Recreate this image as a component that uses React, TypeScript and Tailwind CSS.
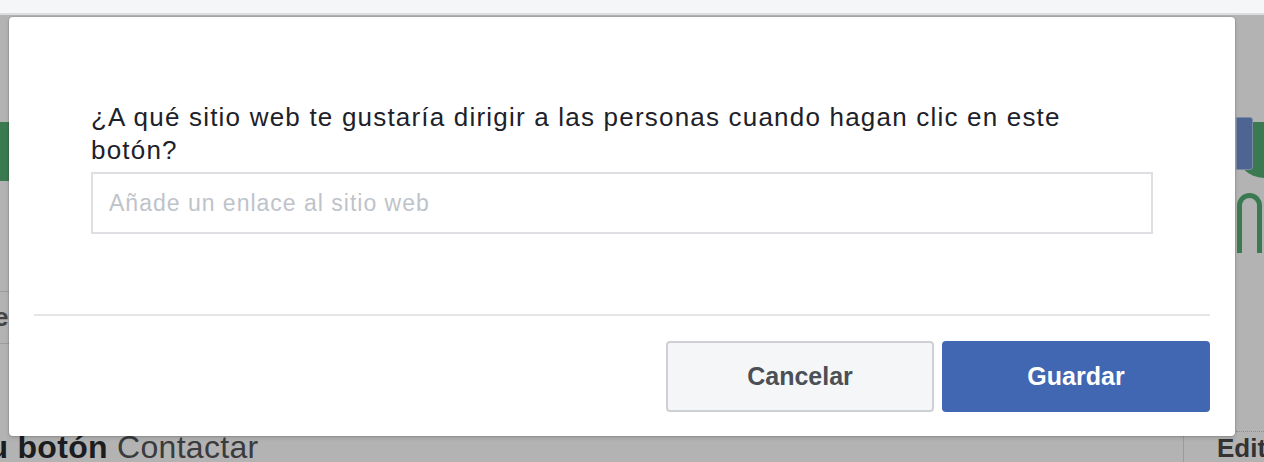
export default function App() {
  return (
    <div className="relative h-[462px] w-full overflow-hidden bg-[#b3b3b3] font-['Liberation_Sans',Helvetica,Arial,sans-serif]">
      {/* Página de fondo (cubierta por el overlay) */}
      <div className="h-[15px] border-b-2 border-[#dcdde0] bg-[#f5f6f7]" />
      <div className="flex h-[420px] justify-between">
        <div className="flex w-[9px] flex-col">
          <div className="h-[107px]" />
          <div className="h-[59px] bg-[#3b7a50]" />
          <div className="h-[110px]" />
          <div className="h-[53px] overflow-hidden border-y border-[#9c9c9c]">
            <span className="-ml-[6px] block text-[26px] font-bold leading-[50px] text-[#444]">e</span>
          </div>
        </div>
        <div className="flex w-[28px] flex-col">
          <div className="h-[107px]" />
          <div className="h-[56px] rounded-bl-[34px] bg-[#3b7a50]">
            <div className="-mt-[5px] h-[53px] w-[17px] rounded-r-[3px] border border-[#7a8aa6] bg-[#4f6591]" />
          </div>
          <div className="h-[15px]" />
          <div className="ml-[1px] h-[60px] w-[25px] rounded-t-[14px] border-x-[5px] border-t-[5px] border-[#3b7a50]" />
          <div className="h-[178px]" />
          <div className="border-t border-dotted border-[#8f8f8f]" />
        </div>
      </div>
      <div className="flex h-[27px] items-start justify-between">
        <div className="-ml-[29px] -mt-[1px] whitespace-nowrap text-[32px] leading-[27px] tracking-[0.3px] text-[#3a3b3d]">
          <span className="font-bold text-[#1c1d20]">Tu botón</span> Contactar
        </div>
        <div className="flex h-full items-start">
          <div className="h-full w-[34px] border-l border-[#9c9c9c]" />
          <span className="w-[47px] overflow-hidden whitespace-nowrap text-[26px] font-bold leading-[27px] text-[#333]">Editar</span>
        </div>
      </div>

      {/* Modal */}
      <div className="absolute left-[9px] top-[17px] flex h-[419px] w-[1226px] flex-col rounded-[4px] bg-white shadow-[0_0_0_1px_rgba(0,0,0,0.08),0_2px_4px_rgba(0,0,0,0.15)]">
        <div className="px-[82px] pt-[84px]">
          <p className="text-[26px] leading-[33px] tracking-[1.2px] text-[#1d2129]">
            ¿A qué sitio web te gustaría dirigir a las personas cuando hagan clic en este botón?
          </p>
          <input
            type="text"
            placeholder="Añade un enlace al sitio web"
            className="mt-[5px] h-[62px] w-full border-2 border-[#dddfe2] px-[16px] text-[23px] tracking-[1px] text-[#1d2129] outline-none placeholder:text-[#bec3c9]"
          />
        </div>
        <div className="mx-[25px] mt-[80px] border-t-2 border-[#e5e5e5]" />
        <div className="flex justify-end gap-[8px] px-[25px] pt-[25px]">
          <button className="h-[71px] w-[268px] rounded-[4px] border-2 border-[#ced0d4] bg-[#f5f6f7] text-[25px] font-bold text-[#4b4f56]">
            Cancelar
          </button>
          <button className="h-[71px] w-[268px] rounded-[4px] bg-[#4267b2] text-[25px] font-bold text-white">
            Guardar
          </button>
        </div>
      </div>
    </div>
  )
}
